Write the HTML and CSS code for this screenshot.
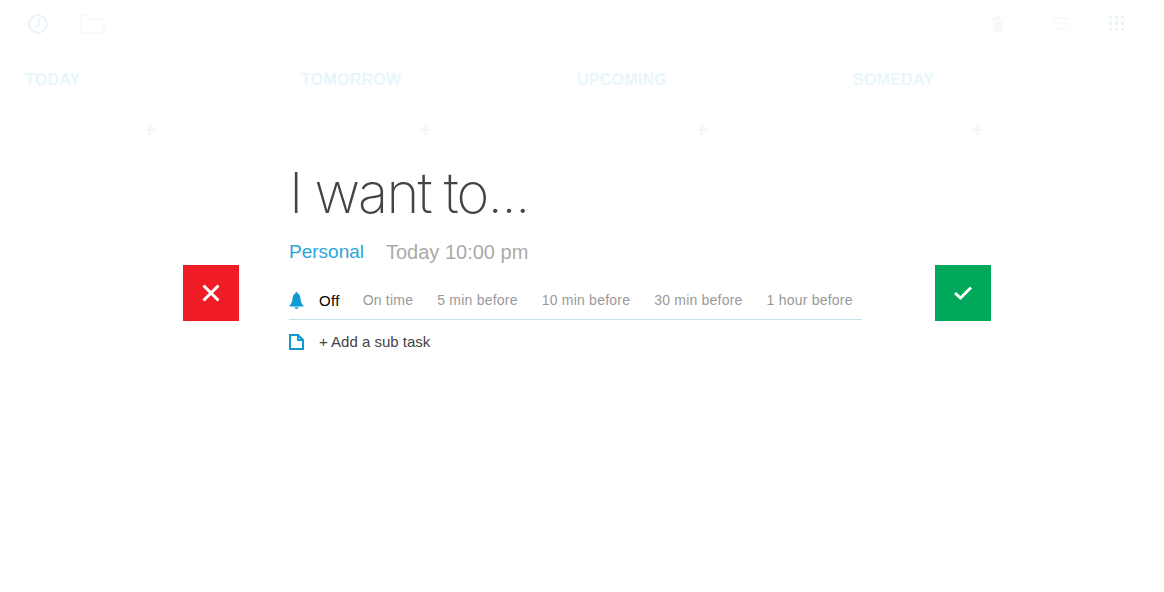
FILE: index.html

```html
<!DOCTYPE html>
<html lang="en">
<head>
  <meta charset="UTF-8">
  <title>New task</title>
  <meta name="viewport" content="width=device-width, initial-scale=1.0">
  <link rel="stylesheet" href="styles.css">
</head>
<body>
  <div class="app">
    <div class="topbar">
      <div class="tools-left">
        <svg class="clock" width="20" height="20" viewBox="0 0 20 20" fill="none" stroke="#e6f5fa" stroke-width="2"><circle cx="10" cy="10" r="8.7"/><path d="M11 4.500v6.200L8 13"/></svg>
        <svg class="folder" width="25" height="20" viewBox="0 0 25 20" fill="none" stroke="#fafafa" stroke-width="2"><path d="M1 19V1h5l3 4h15v14z"/></svg>
      </div>
      <div class="tools-right">
        <div class="trash-cell">
          <svg width="12" height="16" viewBox="0 0 12 16" fill="#f7f7f7"><path d="M4 0h4v2h4v2H0V2h4zM1 5h10l-1 11H2z"/></svg>
        </div>
        <svg class="lines" width="18" height="15" viewBox="0 0 18 15" fill="#fafafa"><path d="M1 1h16v2H1zM1 6h16v2H1zM1 12h16v2H1z"/></svg>
        <svg class="dots" width="15" height="15" viewBox="0 0 15 15" fill="#e6f5fa"><path d="M0 0h3v3H0zM6 0h3v3H6zM12 0h3v3h-3zM0 6h3v3H0zM6 6h3v3H6zM12 6h3v3h-3zM0 12h3v3H0zM6 12h3v3H6zM12 12h3v3h-3z"/></svg>
      </div>
    </div>

    <div class="board">
      <div class="column"><div class="column-title">TODAY</div><div class="add">+</div></div>
      <div class="column"><div class="column-title">TOMORROW</div><div class="add">+</div></div>
      <div class="column"><div class="column-title">UPCOMING</div><div class="add">+</div></div>
      <div class="column"><div class="column-title">SOMEDAY</div><div class="add">+</div></div>
    </div>
  </div>

  <div class="editor">
    <button class="action cancel" aria-label="Cancel">
      <svg width="20" height="20" viewBox="0 0 20 20" fill="none" stroke="#fff" stroke-width="3"><path d="M2.500 2.500l15 15M17.500 2.500l-15 15"/></svg>
    </button>

    <div class="form">
      <h1 class="task-title">I want to...</h1>
      <div class="meta">
        <span class="list-name">Personal</span>
        <span class="due">Today 10:00 pm</span>
      </div>

      <div class="row reminders">
        <svg class="row-icon" width="15" height="17" viewBox="0 0 16 18" fill="#0d9bd1"><path d="M8 0c.8 0 1.200.6 1.200 1.500C11.400 2.200 12 4 12.200 7c.2 3 1.200 5.500 3.300 7.500v1H.5v-1C2.600 12.500 3.600 10 3.800 7 4 4 4.600 2.200 6.800 1.500 6.800.6 7.200 0 8 0zM6 16.300h4C10 17.400 9 18 8 18s-2-.6-2-1.700z"/></svg>
        <span class="option active">Off</span>
        <span class="option">On time</span>
        <span class="option">5 min before</span>
        <span class="option">10 min before</span>
        <span class="option">30 min before</span>
        <span class="option">1 hour before</span>
      </div>

      <div class="row subtask">
        <svg class="row-icon" width="15" height="16" viewBox="0 0 15 16" fill="none" stroke="#0d9bd1" stroke-width="2"><path d="M1 1h8l5 5v9H1zM9 1v5h5"/></svg>
        <span>+ Add a sub task</span>
      </div>
    </div>

    <button class="action confirm" aria-label="Save">
      <svg width="20" height="16" viewBox="0 0 20 16" fill="none" stroke="#fff" stroke-width="3"><path d="M2 8l5.500 5L18 2.500"/></svg>
    </button>
  </div>
</body>
</html>
```

FILE: styles.css

```css
html, body { margin: 0; height: 100%; background: #fff; overflow: hidden; }
body { position: relative; font-family: "Liberation Sans", Arial, sans-serif; }

.topbar { display: flex; justify-content: space-between; height: 50px; border-bottom: 1px solid #fdfdfd; }
.tools-left { display: flex; align-items: flex-start; gap: 32px; padding: 14px 0 0 28px; }
.tools-right { display: flex; align-items: flex-start; padding: 10px 40px 0 0; }
.trash-cell { display: flex; justify-content: center; width: 41px; height: 19px; padding-top: 6px; border-left: 1px solid #fdfdfd; border-right: 1px solid #fdfdfd; }
.lines { margin: 6px 0 0 33px; }
.dots { margin: 6px 0 0 39px; }

.board { display: grid; grid-template-columns: repeat(4, 276px); padding-left: 25px; }
.column-title { margin-top: 20px; font-size: 16px; line-height: 18px; font-weight: bold; letter-spacing: 0.25px; color: #e8f6fb; }
.add { width: 130px; margin-top: 31px; font-size: 18px; line-height: 20px; font-weight: bold; text-align: right; color: #f4f4f4; }

.editor { position: absolute; top: 0; left: 0; right: 0; bottom: 0; display: flex; align-items: flex-start; padding-left: 183px; }
.action { display: flex; align-items: center; justify-content: center; width: 56px; height: 56px; margin-top: 265px; padding: 0; border: none; }
.cancel { background: #ef1c25; }
.confirm { background: #00a859; margin-left: 73px; }

.form { width: 573px; margin-left: 50px; padding-top: 160px; }
.task-title { margin: 0; font-family: Inter, sans-serif; font-size: 56px; line-height: 66px; font-weight: 200; color: #444; letter-spacing: -1.8px; word-spacing: -1px; }
.meta { display: flex; gap: 22px; margin-top: 14px; font-size: 19px; line-height: 24px; }
.list-name { color: #2aa7d8; }
.due { color: #aaa; font-size: 20px; }

.row { display: flex; align-items: center; font-size: 14px; white-space: nowrap; }
.row-icon { flex: none; margin-right: 15px; }
.reminders { height: 38px; margin-top: 17px; border-bottom: 1px solid #c6dfe9; color: #999; letter-spacing: 0.22px; }
.option { margin-right: 24px; }
.option.active { color: #000; font-size: 15px; margin-right: 23px; letter-spacing: 0.3px; }
.subtask { height: 43px; color: #444; font-size: 15px; }
```
